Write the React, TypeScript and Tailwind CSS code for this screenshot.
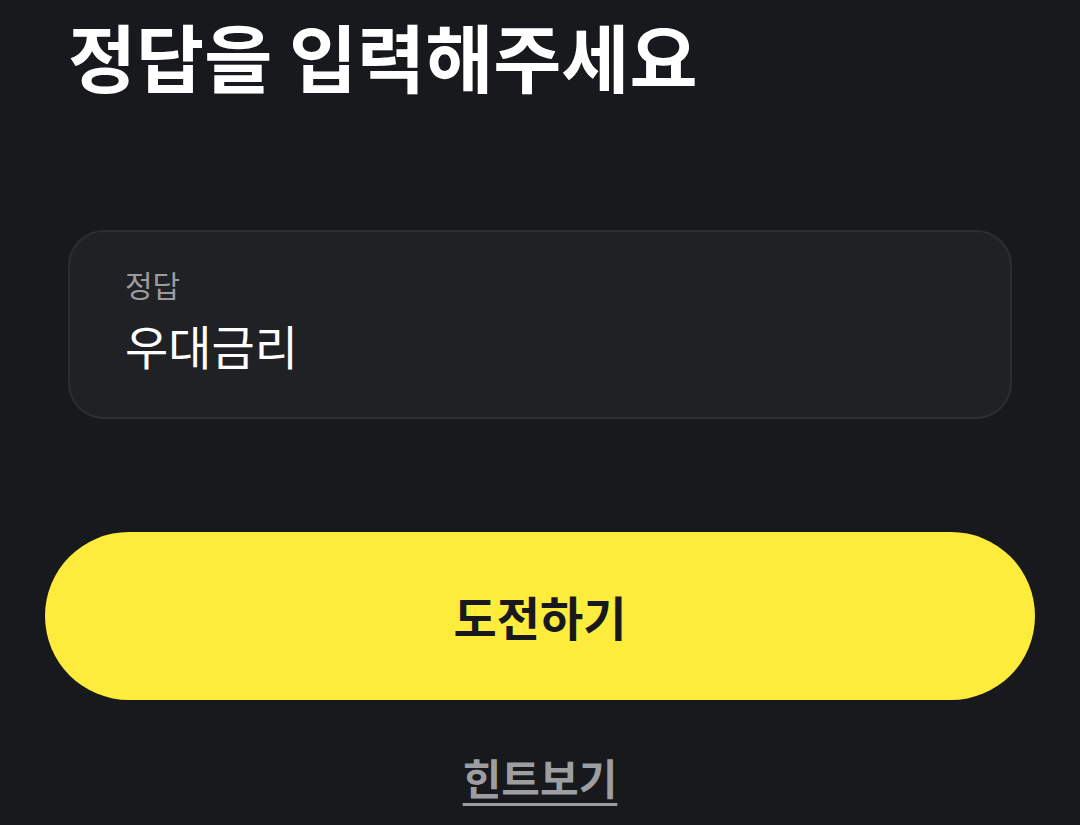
export default function App() {
  return (
    <div
      className="min-h-[825px] w-full overflow-hidden bg-[#17191c] px-[45px]"
      style={{ fontFamily: '"Noto Sans CJK KR", "Noto Sans", sans-serif' }}
    >
      <h1 className="ml-[23px] pt-[7px] text-[74px] leading-[96px] font-bold text-white">
        정답을 입력해주세요
      </h1>

      <div className="mx-[23px] mt-[127px] h-[189px] rounded-[36px] border-2 border-[#2c2e31] bg-[#1f2124] px-[55px] pt-[32px]">
        <div className="text-[30px] leading-[40px] text-[#9b9c9f]">정답</div>
        <div className="mt-[10px] text-[47px] leading-[62px] text-white">우대금리</div>
      </div>

      <button className="mt-[113px] flex h-[168px] w-full items-center justify-center rounded-full bg-[#feec3c]">
        <span className="text-[47px] font-bold text-[#17191c]">도전하기</span>
      </button>

      <div className="mt-[48px] flex justify-center">
        <span className="text-[42px] font-bold leading-[58px] text-[#9d9ea1] underline decoration-[3px] underline-offset-[8px]">
          힌트보기
        </span>
      </div>
    </div>
  );
}
